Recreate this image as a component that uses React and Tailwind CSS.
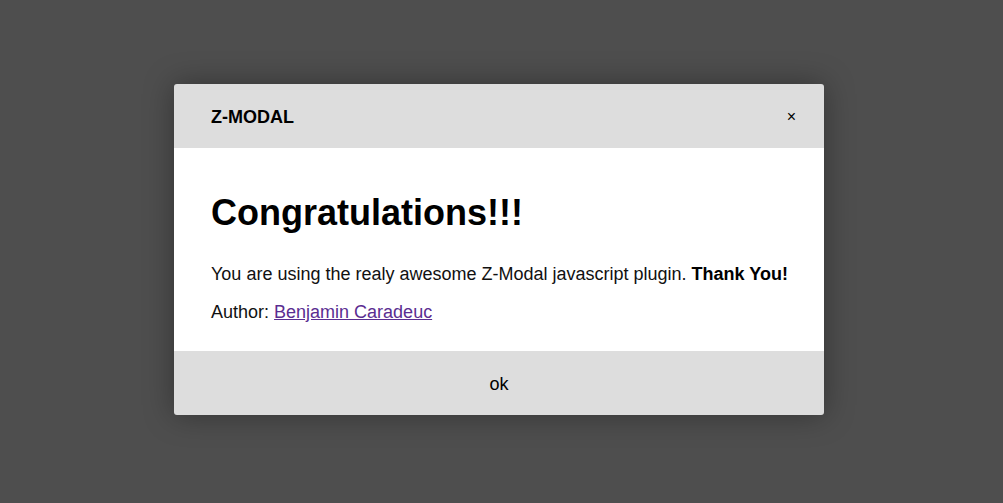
export default function App() {
  return (
    <div className="w-[1003px] h-[503px] bg-[#4e4e4e] flex items-start justify-start pl-[174px] pt-[84px]" style={{ fontFamily: '"Liberation Sans", Arial, sans-serif' }}>
      <div className="w-[650px] rounded-[3px] overflow-hidden shadow-[0_0_30px_rgba(0,0,0,0.35)]">
        <div className="h-[64px] bg-[#dddddd] flex items-center justify-between pl-[37px] pr-[28px] pt-[2px]">
          <span className="text-[18px] font-bold text-black">Z-MODAL</span>
          <span className="text-[16px] text-black leading-none">×</span>
        </div>
        <div className="bg-white px-[37px] pt-[44px] pb-[28px] text-[18px] text-[#111] leading-[normal]">
          <h1 className="text-[36px] font-bold text-black leading-[normal] mb-[30px]">Congratulations!!!</h1>
          <p className="mb-[17px] whitespace-nowrap">
            You are using the realy awesome Z-Modal javascript plugin. <b className="text-black">Thank You!</b>
          </p>
          <p>
            Author: <a href="#" className="text-[#5a2d91] underline">Benjamin Caradeuc</a>
          </p>
        </div>
        <div className="h-[64px] bg-[#dddddd] flex items-center justify-center text-[18px] text-black pt-[2px]">
          ok
        </div>
      </div>
    </div>
  );
}
